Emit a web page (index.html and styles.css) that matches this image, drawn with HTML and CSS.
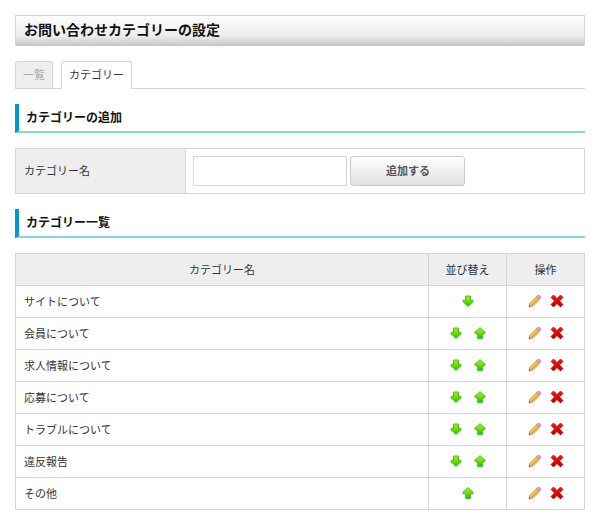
FILE: index.html
```html
<!DOCTYPE html>
<html lang="ja">
<head>
<meta charset="UTF-8" />
<meta name="viewport" content="width=device-width, initial-scale=1" />
<title>お問い合わせカテゴリーの設定</title>
<link rel="stylesheet" href="styles.css">
</head>
<body>
  <svg class="sprite" aria-hidden="true">
    <defs>
      <linearGradient id="green" x1="0" y1="0" x2="0" y2="1">
        <stop offset="0" stop-color="#b4f000" />
        <stop offset="1" stop-color="#1fc41a" />
      </linearGradient>
      <linearGradient id="red" x1="0" y1="0" x2="0" y2="1">
        <stop offset="0" stop-color="#f21a12" />
        <stop offset="1" stop-color="#b80000" />
      </linearGradient>
      <symbol id="down" viewBox="0 0 16 16">
        <path d="M5.5 3h5v4.500h2.600v1.200L8 13.400 2.900 8.700V7.500h2.600z" fill="url(#green)" stroke="#4cc321" stroke-width="1" stroke-linejoin="round" />
      </symbol>
      <symbol id="up" viewBox="0 0 16 16">
        <path d="M5.500 13.500h5v-5h2.600V7.300L8 2.600 2.900 7.300v1.200h2.600z" fill="url(#green)" stroke="#4cc321" stroke-width="1" stroke-linejoin="round" />
      </symbol>
      <symbol id="pencil" viewBox="0 0 16 16">
        <path d="M2 14l.8-3.700 2.900 2.900z" fill="#e9cfa4" stroke="#a08a6c" stroke-width=".6" />
        <path d="M2 14l.4-1.700 1.300 1.300z" fill="#444" />
        <path d="M2.800 10.300l6.700-6.700 2.900 2.900-6.700 6.700z" fill="#f8a935" stroke="#c98a3a" stroke-width=".6" />
        <path d="M3.800 10.800l6.600-6.600" stroke="#ffd489" stroke-width="1" />
        <path d="M9.500 3.600l1.300-1.300 2.900 2.900-1.300 1.300z" fill="#b8bcc2" stroke="#8c9098" stroke-width=".5" />
        <path d="M10.800 2.300c1.300-1.200 4.100 1.500 2.900 2.900z" fill="#d79ad2" stroke="#b58abb" stroke-width=".5" />
      </symbol>
      <symbol id="cross" viewBox="0 0 16 16">
        <path d="M4.500 2L8 5.500 11.500 2 14 4.500 10.500 8l3.500 3.500-2.500 2.500L8 10.500 4.500 14 2 11.500 5.500 8 2 4.500z" fill="url(#red)" stroke="#c40808" stroke-width=".8" stroke-linejoin="round" />
      </symbol>
    </defs>
  </svg>

  <h1 class="page-title">お問い合わせカテゴリーの設定</h1>

  <nav class="tabs">
    <a class="tab" href="#list">一覧</a>
    <a class="tab active" href="#category">カテゴリー</a>
  </nav>

  <h2 class="section-title">カテゴリーの追加</h2>
  <form class="add-form">
    <label class="add-label" for="name">カテゴリー名</label>
    <div class="add-field">
      <input class="text" type="text" id="name" name="name" />
      <button class="submit" type="submit">追加する</button>
    </div>
  </form>

  <h2 class="section-title">カテゴリー一覧</h2>
  <table class="list">
    <thead>
      <tr>
        <th>カテゴリー名</th>
        <th class="narrow">並び替え</th>
        <th class="narrow">操作</th>
      </tr>
    </thead>
    <tbody id="rows"></tbody>
  </table>

<script>
  const names = [
    "サイトについて",
    "会員について",
    "求人情報について",
    "応募について",
    "トラブルについて",
    "違反報告",
    "その他"
  ];

  function icon(id, label) {
    return `<a class="icon" href="#" aria-label="${label}"><svg width="16" height="16"><use href="#${id}" /></svg></a>`;
  }

  document.getElementById("rows").innerHTML = names.map((name, i) => {
    const down = i < names.length - 1 ? icon("down", "下へ") : "";
    const up = i > 0 ? icon("up", "上へ") : "";
    return `<tr>
      <td>${name}</td>
      <td><div class="icons sort">${down}${up}</div></td>
      <td><div class="icons">${icon("pencil", "編集")}${icon("cross", "削除")}</div></td>
    </tr>`;
  }).join("");
</script>
</body>
</html>
```
FILE: styles.css
```css
* {
  box-sizing: border-box;
}

body {
  margin: 0;
  padding: 15px;
  background: #fff;
  color: #333;
  font-family: "Noto Sans CJK JP", sans-serif;
  font-size: 11px;
  line-height: 16px;
}

.sprite {
  position: absolute;
  width: 0;
  height: 0;
}

.page-title {
  margin: 0 0 15px;
  padding: 3px 8px 5px;
  border: 1px solid #d5d5d5;
  border-bottom-color: #c4c4c4;
  background: linear-gradient(#fff, #ececec 70%, #c8c8c8);
  color: #111;
  font-size: 14px;
  line-height: 21px;
}

.tabs {
  display: flex;
  gap: 8px;
  margin-bottom: 15px;
  border-bottom: 1px solid #d5d5d5;
}

.tab {
  padding: 4px 7px 7px;
  border: 1px solid #d5d5d5;
  border-bottom: 0;
  border-radius: 3px 3px 0 0;
  background: #eee;
  color: #aaa;
  text-decoration: none;
}

.tab.active {
  margin-bottom: -1px;
  background: #fff;
  color: #333;
}

.tab:not(.active) {
  padding-bottom: 6px;
}

.section-title {
  margin: 0 0 15px;
  padding: 3px 7px 4px;
  border-left: 4px solid #09c;
  border-bottom: 2px solid #8cd2e6;
  color: #111;
  font-size: 12px;
  line-height: 20px;
}

.add-form {
  display: flex;
  margin-bottom: 15px;
  border: 1px solid #d5d5d5;
}

.add-label {
  display: flex;
  align-items: center;
  width: 30%;
  padding: 0 8px 2px;
  border-right: 1px solid #d5d5d5;
  background: #eee;
}

.add-field {
  display: flex;
  flex: 1;
  gap: 3px;
  padding: 7px;
}

.text {
  width: 154px;
  height: 30px;
  padding: 0 6px;
  border: 1px solid #d5d5d5;
  font: inherit;
}

.submit {
  width: 115px;
  height: 30px;
  padding: 0 0 2px;
  border: 1px solid #ccc;
  border-radius: 3px;
  background: linear-gradient(#fff, #e0e0e0);
  color: #555;
  font: inherit;
  font-weight: bold;
}

.list {
  width: 100%;
  border-collapse: collapse;
  table-layout: fixed;
}

.list th,
.list td {
  height: 32px;
  padding: 0 8px 2px;
  border: 1px solid #d5d5d5;
  text-align: left;
}

.list th {
  background: #eee;
  font-weight: normal;
  text-align: center;
}

.list .narrow {
  width: 78px;
}

.icons {
  display: flex;
  justify-content: center;
  gap: 6px;
}

.icons.sort {
  gap: 8px;
}

.icon,
.icon svg {
  display: block;
}
```
